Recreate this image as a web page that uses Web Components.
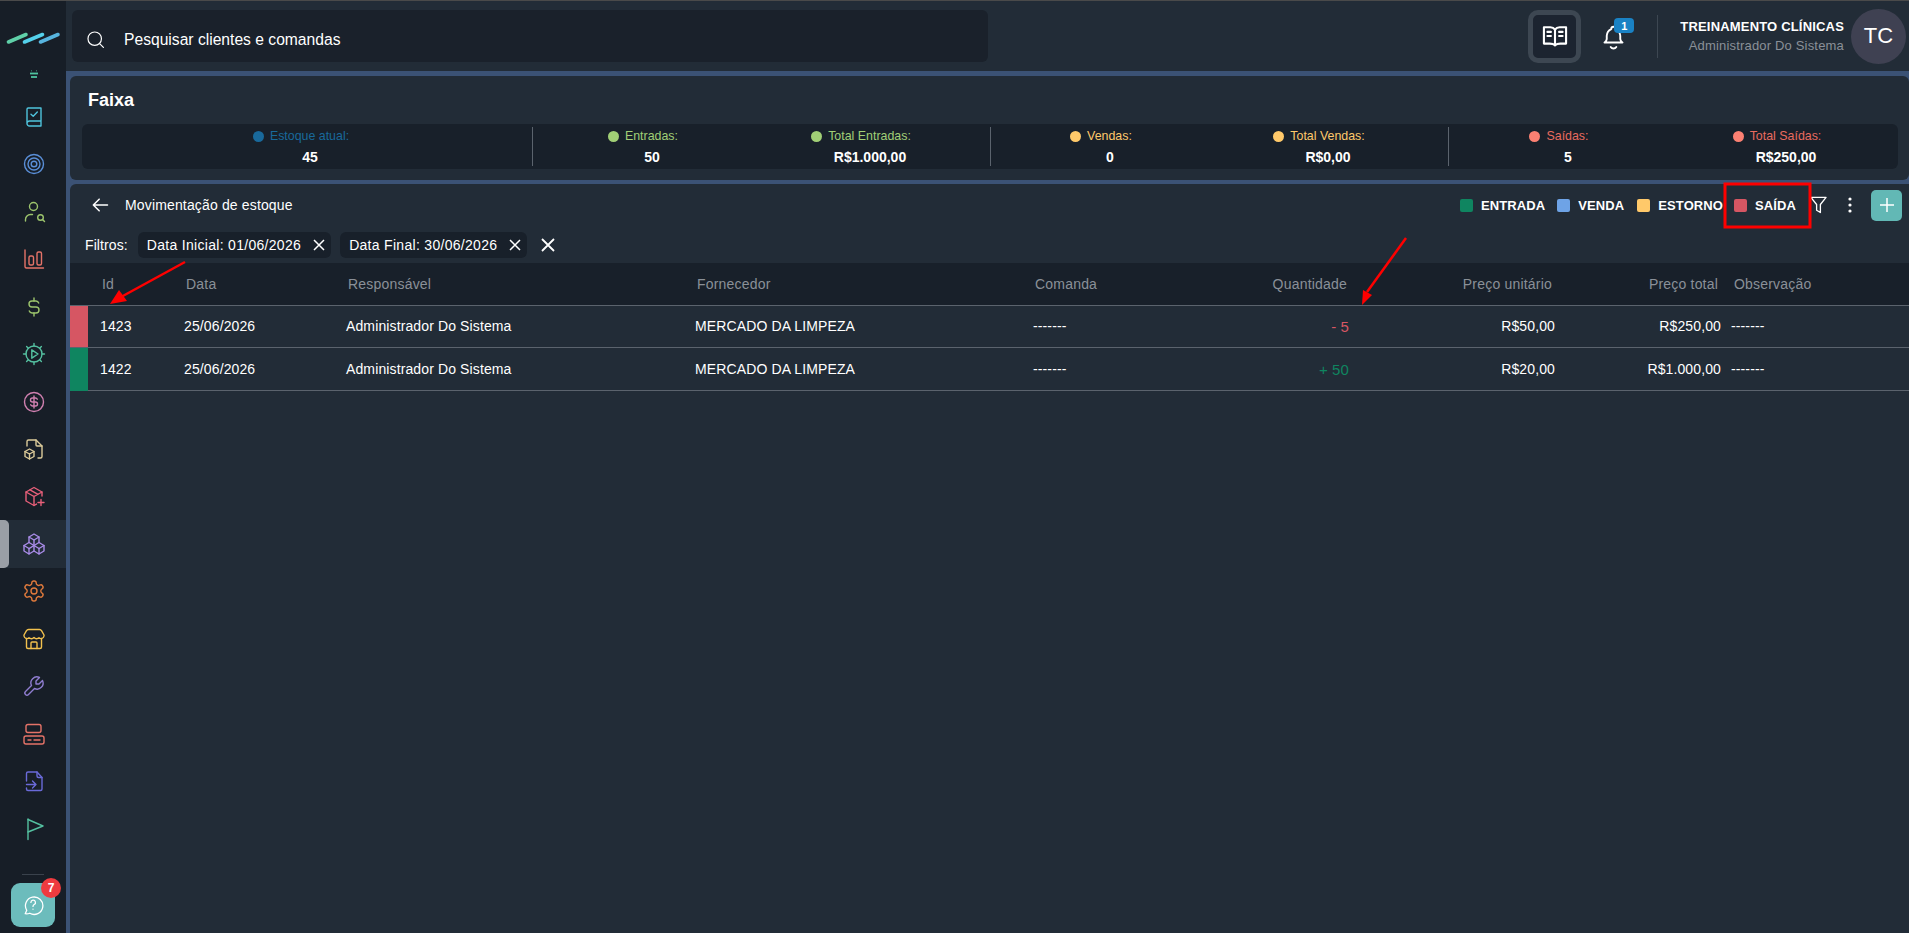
<!DOCTYPE html>
<html lang="pt-BR">
<head>
<meta charset="utf-8">
<title>Movimentação de estoque</title>
<style>
  html, body { margin: 0; height: 100%; background: #3b5275; overflow: hidden; }
  body { font-family: "Liberation Sans", Arial, sans-serif; color: #fff; }
</style>
</head>
<body>
<app-shell>
  <side-nav slot="nav"></side-nav>
  <top-bar slot="top"></top-bar>
  <stat-strip slot="stats"></stat-strip>
  <stock-panel slot="panel"></stock-panel>
</app-shell>
<mark-up></mark-up>

<script>
const ICONS = {
  book: ['#4fc3dc', '<path d="M5 18.500V4.200C5 3.500 5.500 3 6.200 3H19v18H7.500A2.500 2.500 0 0 1 5 18.500A2.500 2.500 0 0 1 7.500 16H19"/><path d="M9 9.200l2.200 2L15.300 7"/>'],
  target: ['#5a8fd8', '<circle cx="12" cy="12" r="9.500"/><circle cx="12" cy="12" r="6"/><circle cx="12" cy="12" r="2.800"/>'],
  user: ['#9cc46c', '<circle cx="11.500" cy="6.500" r="4"/><path d="M3.500 21v-1.500A5 5 0 0 1 8.500 14.500h2"/><circle cx="18.500" cy="17.500" r="2.800"/><path d="M20.500 19.500l2 2"/>'],
  chart: ['#e57368', '<path d="M3 3v16.500A1.500 1.500 0 0 0 4.500 21H21.500"/><rect x="7" y="9" width="4.500" height="9" rx="1.500"/><rect x="15" y="5" width="4.500" height="13" rx="1.500"/>'],
  dollar: ['#9cc46c', '<path d="M16.700 8a3 3 0 0 0-2.700-2h-4a3 3 0 0 0 0 6h4a3 3 0 0 1 0 6h-4a3 3 0 0 1-2.700-2"/><path d="M12 3v3m0 12v3"/>'],
  cogplay: ['#54c0a0', '<circle cx="12" cy="12" r="8"/><path d="M9.800 7.800v8.400l6.200-4.200z"/><path d="M12 1.500v2.500M12 20v2.500M1.500 12H4M20 12h2.500M4.600 4.600l1.700 1.700M17.700 17.700l1.700 1.700M4.600 19.400l1.700-1.700M17.700 6.300l1.700-1.700"/>'],
  coin: ['#d080b0', '<circle cx="12" cy="12" r="9.500"/><path d="M15.300 9.200a2 2 0 0 0-1.800-1.200h-3a2 2 0 1 0 0 4h3a2 2 0 1 1 0 4h-3a2 2 0 0 1-1.800-1.200"/><path d="M12 6v12"/>'],
  filebox: ['#dccb9a', '<path d="M5 9V4.500A1.500 1.500 0 0 1 6.500 3H14l6 6v10.500A1.500 1.500 0 0 1 18.500 21H16"/><path d="M14 3v5a1 1 0 0 0 1 1h5"/><path d="M7.500 12l4.500 2.500v5L7.500 22 3 19.500v-5z"/><path d="M3 14.500l4.500 2.500 4.500-2.500M7.500 17v5"/>'],
  boxplus: ['#e8607a', '<path d="M20 12V8l-8-4.500L4 8v9l8 4.500 2.500-1.400"/><path d="M4 8l8 4.500L20 8M12 12.500v9M8 5.800l8 4.500"/><path d="M16 18.500h6M19 15.500v6"/>'],
  packages: ['#a98ce8', '<path d="M7 16.500l-5-3 5-3 5 3V19l-5 3z"/><path d="M2 13.500V19l5 3"/><path d="M7 16.545l5-3.030"/><path d="M17 16.500l-5-3 5-3 5 3V19l-5 3z"/><path d="M12 19l5 3"/><path d="M17 16.500l5-3"/><path d="M12 13.500V8L7 5l5-3 5 3v5.500"/><path d="M7 5.030v5.455"/><path d="M12 8l5-3"/>'],
  gear: ['#e07a3c', '<path d="M12.220 2h-.44a2 2 0 0 0-2 2v.18a2 2 0 0 1-1 1.730l-.43.25a2 2 0 0 1-2 0l-.15-.08a2 2 0 0 0-2.730.73l-.22.38a2 2 0 0 0 .73 2.730l.15.1a2 2 0 0 1 1 1.720v.51a2 2 0 0 1-1 1.740l-.15.09a2 2 0 0 0-.73 2.730l.22.38a2 2 0 0 0 2.730.73l.15-.08a2 2 0 0 1 2 0l.43.25a2 2 0 0 1 1 1.730V20a2 2 0 0 0 2 2h.44a2 2 0 0 0 2-2v-.18a2 2 0 0 1 1-1.730l.43-.25a2 2 0 0 1 2 0l.15.08a2 2 0 0 0 2.730-.73l.22-.39a2 2 0 0 0-.73-2.730l-.15-.08a2 2 0 0 1-1-1.740v-.5a2 2 0 0 1 1-1.740l.15-.09a2 2 0 0 0 .73-2.730l-.22-.38a2 2 0 0 0-2.730-.73l-.15.08a2 2 0 0 1-2 0l-.43-.25a2 2 0 0 1-1-1.730V4a2 2 0 0 0-2-2z"/><circle cx="12" cy="12" r="3"/>'],
  store: ['#f2c14e', '<path d="M4.500 11.500V20a1.500 1.500 0 0 0 1.500 1.500h12a1.500 1.500 0 0 0 1.500-1.500v-8.500"/><path d="M6.500 2.500h11c1 0 1.600.4 2 1.200L22 8v1a3 3 0 0 1-5 1.800a3.500 3.500 0 0 1-5-.3a3.500 3.500 0 0 1-5 .3A3 3 0 0 1 2 9V8l2.500-4.300c.4-.8 1-1.200 2-1.200z"/><path d="M9 21.500V16a1 1 0 0 1 1-1h4a1 1 0 0 1 1 1v5.500"/>'],
  tool: ['#8f7dd0', '<path transform="translate(24 0) scale(-1 1)" d="M7 10h3V7L6.500 3.500a6 6 0 0 1 8 8l6 6a2 2 0 0 1-3 3l-6-6a6 6 0 0 1-8-8L7 10"/>'],
  server: ['#e57368', '<rect x="4" y="2.500" width="15" height="8" rx="2"/><rect x="2" y="14" width="20" height="8" rx="2"/><path d="M6 18h3M12 18h6"/>'],
  fileimport: ['#6a6ad8', '<path d="M4.500 12V4.500A1.500 1.500 0 0 1 6 3h9l5 5.500V20a1.500 1.500 0 0 1-1.500 1.500H6A1.500 1.500 0 0 1 4.500 20v-1"/><path d="M15 3v4a1.500 1.500 0 0 0 1.500 1.500H20"/><path d="M4.500 15.500H14M10.500 12l3.500 3.500-3.500 3.500"/>'],
  flag: ['#54c0a0', '<path d="M6 2v20.500"/><path d="M6 2.500l15 6.500-15 6"/>']
};

class AppShell extends HTMLElement {
  constructor() {
    super();
    this.attachShadow({mode: 'open'});
    this.shadowRoot.innerHTML = `
      <style>
        :host { display: grid; grid-template-columns: 66px 1fr; height: 933px; width: 1909px; overflow: hidden; }
        .main { display: flex; flex-direction: column; min-width: 0; height: 933px; }
        .content { flex: 1; display: flex; flex-direction: column; gap: 4px; padding: 5px 0 0 4px; min-height: 0; }
      </style>
      <div><slot name="nav"></slot></div>
      <div class="main">
        <slot name="top"></slot>
        <div class="content">
          <slot name="stats"></slot>
          <slot name="panel"></slot>
        </div>
      </div>`;
  }
}
customElements.define('app-shell', AppShell);

class NavIcon extends HTMLElement {
  connectedCallback() {
    const [color, paths] = ICONS[this.getAttribute('name')];
    const active = this.hasAttribute('active');
    this.attachShadow({mode: 'open'}).innerHTML = `
      <style>
        :host { display: flex; align-items: center; justify-content: center; height: 47.47px; width: 66px; position: relative; box-sizing: border-box; padding-left: 2px; }
        :host([active]) { background: #222c37; }
        .bar { position: absolute; left: 0; top: 0; bottom: 0; width: 9px; background: #9a9fa6; border-radius: 0 5px 5px 0; }
        svg { width: 24px; height: 24px; fill: none; stroke: ${color}; stroke-width: 1.400; stroke-linecap: round; stroke-linejoin: round; }
      </style>
      ${active ? '<div class="bar"></div>' : ''}
      <svg viewBox="0 0 24 24">${paths}</svg>`;
  }
}
customElements.define('nav-icon', NavIcon);

class SideNav extends HTMLElement {
  connectedCallback() {
    const names = ['book','target','user','chart','dollar','cogplay','coin','filebox','boxplus','packages','gear','store','tool','server','fileimport','flag'];
    this.attachShadow({mode: 'open'}).innerHTML = `
      <style>
        :host { display: flex; flex-direction: column; height: 933px; background: #171e27; box-sizing: border-box; border-top: 1px solid #4a4a4a; }
        .logo { height: 62px; display: flex; align-items: flex-end; padding-bottom: 14px; box-sizing: border-box; flex: none; }
        .logo svg { width: 66px; height: 20px; }
        .mini { height: 30px; display: flex; justify-content: center; flex: none; align-items: flex-start; padding: 7px 0 0 2px; box-sizing: border-box; }
        .mini svg { width: 10px; height: 10px; fill: none; stroke: #4fc5a0; }
        .items { flex: none; }
        .rule { width: 22px; height: 1px; background: #3a424c; margin: auto auto 8px 22px; }
        .help { position: relative; flex: none; width: 44px; height: 44px; border-radius: 9px; background: #6cbcbc; margin: 0 0 6px 11px; display: flex; align-items: center; justify-content: center; }
        .help svg { width: 22px; height: 22px; fill: none; stroke: #fff; stroke-width: 1.400; stroke-linecap: round; stroke-linejoin: round; }
        .badge { position: absolute; top: -5px; right: -6px; width: 20px; height: 20px; border-radius: 50%; background: #ee3b3f; color: #fff; font-size: 12px; font-weight: 700; display: flex; align-items: center; justify-content: center; }
      </style>
      <div class="logo">
        <svg viewBox="0 0 66 20" stroke-width="3.600" stroke-linecap="round">
          <path d="M8.500 13L26 5.500" stroke="#5fd0a8"/>
          <path d="M24.500 13L42.500 5.500" stroke="#54d0ea"/>
          <path d="M40.500 13L58 5.500" stroke="#57b4de"/>
        </svg>
      </div>
      <div class="mini"><svg viewBox="0 0 10 10"><path d="M2.500 0v1.500M7.500 0v1.500" stroke-width="1" opacity=".5"/><path d="M1 3.500h8" stroke-width="1.800"/><path d="M2 7h6" stroke-width="1.800"/></svg></div>
      <div class="items">${names.map(n => `<nav-icon name="${n}"${n === 'packages' ? ' active' : ''}></nav-icon>`).join('')}</div>
      <div class="rule"></div>
      <div class="help">
        <svg viewBox="0 0 24 24"><path d="M3.500 21.500l1.700-3.700A9.500 9.500 0 1 1 8.500 21a11 11 0 0 1-5 .5z"/><path d="M9.700 9.200a2.500 2.500 0 1 1 3.600 2.300c-.9.500-1.300 1-1.300 2"/><path d="M12 16.500v.1"/></svg>
        <span class="badge">7</span>
      </div>`;
  }
}
customElements.define('side-nav', SideNav);

class TopBar extends HTMLElement {
  connectedCallback() {
    this.attachShadow({mode: 'open'}).innerHTML = `
      <style>
        :host { display: flex; align-items: center; height: 71px; flex: none; background: #222c37; box-sizing: border-box; border-top: 1px solid #4a4a4a; padding: 0 3px 0 6px; }
        .search { width: 916px; height: 52px; background: #1a212b; border-radius: 6px; display: flex; align-items: center; gap: 19px; padding: 7px 0 0 14px; box-sizing: border-box; font-size: 15.650px; }
        .search svg { width: 19px; height: 19px; fill: none; stroke: #fff; stroke-width: 1.500; stroke-linecap: round; }
        .right { margin-left: auto; display: flex; align-items: center; }
        .bookbtn { width: 53px; height: 53px; box-sizing: border-box; border: 5px solid #3d4752; border-radius: 10px; background: #1c2430; display: flex; align-items: center; justify-content: center; }
        .bookbtn svg { width: 28px; height: 28px; fill: none; stroke: #fff; stroke-width: 1.800; stroke-linecap: round; stroke-linejoin: round; }
        .bell { position: relative; width: 30px; height: 30px; margin-left: 19px; }
        .bell svg { width: 27px; height: 27px; fill: none; stroke: #fff; stroke-width: 1.700; stroke-linecap: round; stroke-linejoin: round; margin-top: 3px; }
        .bell b { position: absolute; left: 14px; top: -3px; width: 20px; height: 15px; background: #1a82c4; border-radius: 4px; font-size: 11px; display: flex; align-items: center; justify-content: center; }
        .sep { width: 1px; height: 43px; background: #3d4752; margin: 0 22px 0 27px; }
        .who { text-align: right; line-height: 19px; margin-right: 7px; letter-spacing: .18px; }
        .who .n { font-size: 13px; font-weight: 700; }
        .who .r { font-size: 13px; color: #8a9098; }
        .avatar { width: 55px; height: 55px; border-radius: 50%; background: #3f4152; font-size: 22px; display: flex; align-items: center; justify-content: center; }
      </style>
      <div class="search">
        <svg viewBox="0 0 24 24"><circle cx="11" cy="11" r="8.500"/><path d="M17.500 17.500L22 22"/></svg>
        <span>Pesquisar clientes e comandas</span>
      </div>
      <div class="right">
        <div class="bookbtn"><svg viewBox="0 0 24 24"><path d="M12 20c-1.300-1.200-2.800-1.500-4.500-1.500H2.500V4.500H8c2 0 3.200.8 4 2 .8-1.200 2-2 4-2h5.500v14h-5c-1.700 0-3.200.3-4.500 1.500z"/><path d="M12 6.500V20M5.500 8.500h3M5.500 12h3M15.500 8.500h3M15.500 12h3"/></svg></div>
        <div class="bell"><svg viewBox="0 0 24 24"><path d="M10 4.500a2 2 0 1 1 4 0a7 7 0 0 1 4 6v3a4 4 0 0 0 2 3H4a4 4 0 0 0 2-3v-3a7 7 0 0 1 4-6"/><path d="M9.500 20.500a3 3 0 0 0 5 0"/></svg><b>1</b></div>
        <div class="sep"></div>
        <div class="who"><div class="n">TREINAMENTO CLÍNICAS</div><div class="r">Administrador Do Sistema</div></div>
        <div class="avatar">TC</div>
      </div>`;
  }
}
customElements.define('top-bar', TopBar);

class StatItem extends HTMLElement {
  connectedCallback() {
    const color = this.getAttribute('color');
    const text = this.getAttribute('text') || color;
    this.attachShadow({mode: 'open'}).innerHTML = `
      <style>
        :host { display: flex; flex-direction: column; align-items: center; gap: 5px; font-size: 12.400px; }
        .l { display: flex; align-items: center; gap: 6px; color: ${text}; line-height: 15px; margin-right: 18px; padding-top: 1px; }
        .l i { width: 11px; height: 11px; border-radius: 50%; background: ${color}; }
        .v { font-size: 14px; font-weight: 700; line-height: 16px; color: #fff; }
      </style>
      <div class="l"><i></i><span>${this.getAttribute('label')}</span></div>
      <div class="v">${this.getAttribute('value')}</div>`;
  }
}
customElements.define('stat-item', StatItem);

class StatStrip extends HTMLElement {
  connectedCallback() {
    this.attachShadow({mode: 'open'}).innerHTML = `
      <style>
        :host { display: block; flex: none; height: 104px; box-sizing: border-box; background: #222c37; border-radius: 6px; padding: 13px 11px 0 12px; }
        h2 { margin: 0 0 12px 6px; font-size: 18px; font-weight: 700; line-height: 23px; }
        .bar { display: grid; grid-template-columns: 450px 458px 458px 450px; height: 45px; background: #18202a; border-radius: 6px; align-items: stretch; }
        .sec { display: grid; align-items: center; margin: 3px 0; border-left: 1px solid #5b636d; }
        .sec:first-child { border-left: 0; grid-template-columns: 1fr; padding-left: 6px; }
        .two { grid-template-columns: 218px 218px; padding-left: 10px; }
      </style>
      <h2>Faixa</h2>
      <div class="bar">
        <div class="sec"><stat-item color="#19699b" label="Estoque atual:" value="45"></stat-item></div>
        <div class="sec two">
          <stat-item color="#a1cf76" label="Entradas:" value="50"></stat-item>
          <stat-item color="#a1cf76" label="Total Entradas:" value="R$1.000,00"></stat-item>
        </div>
        <div class="sec two">
          <stat-item color="#ffc96a" label="Vendas:" value="0"></stat-item>
          <stat-item color="#ffc96a" label="Total Vendas:" value="R$0,00"></stat-item>
        </div>
        <div class="sec two">
          <stat-item color="#fb8072" text="#e96b5f" label="Saídas:" value="5"></stat-item>
          <stat-item color="#fb8072" text="#e96b5f" label="Total Saídas:" value="R$250,00"></stat-item>
        </div>
      </div>`;
  }
}
customElements.define('stat-strip', StatStrip);

class FilterChip extends HTMLElement {
  constructor() {
    super();
    this.attachShadow({mode: 'open'}).innerHTML = `
      <style>
        :host { display: inline-flex; align-items: center; height: 26px; box-sizing: border-box; padding: 0 6px 0 9px; gap: 12px; background: #18202a; border-radius: 6px; font-size: 14px; letter-spacing: .3px; }
        svg { width: 12px; height: 12px; stroke: #fff; stroke-width: 1.500; fill: none; }
      </style>
      <slot></slot>
      <svg viewBox="0 0 12 12"><path d="M1 1l10 10M11 1L1 11"/></svg>`;
  }
}
customElements.define('filter-chip', FilterChip);

class LegendItem extends HTMLElement {
  connectedCallback() {
    this.attachShadow({mode: 'open'}).innerHTML = `
      <style>
        :host { display: inline-flex; align-items: center; gap: 8px; font-size: 13px; font-weight: 700; letter-spacing: .1px; }
        i { width: 13px; height: 13px; border-radius: 2px; background: ${this.getAttribute('color')}; }
      </style>
      <i></i><slot></slot>`;
  }
}
customElements.define('legend-item', LegendItem);

class StockRow extends HTMLElement {
  connectedCallback() {
    const color = this.getAttribute('color');
    const cells = JSON.parse(this.getAttribute('cells'));
    this.attachShadow({mode: 'open'}).innerHTML = `
      <style>
        :host { display: grid; grid-template-columns: var(--cols); height: 42px; box-sizing: border-box; border-bottom: 1px solid #5b636d; font-size: 14px; letter-spacing: .12px; align-items: center; padding-bottom: 1px; }
        :host(:last-child) { height: 43px; padding-bottom: 0; }
        .b { align-self: stretch; background: ${color}; margin-bottom: -1px; }
        .id { padding-left: 12px; }
        .r { text-align: right; }
        .q { color: ${color}; font-size: 15px; padding-right: 1px; }
        .o { padding-left: 10px; }
      </style>
      <div class="b"></div>
      <div class="id">${cells[0]}</div><div>${cells[1]}</div><div>${cells[2]}</div><div>${cells[3]}</div><div>${cells[4]}</div>
      <div class="r q">${cells[5]}</div><div class="r">${cells[6]}</div><div class="r">${cells[7]}</div><div class="o">${cells[8]}</div>`;
  }
}
customElements.define('stock-row', StockRow);

class StockPanel extends HTMLElement {
  connectedCallback() {
    this.attachShadow({mode: 'open'}).innerHTML = `
      <style>
        :host { display: flex; flex-direction: column; flex: 1; min-height: 0; background: #222c37; border-radius: 6px 0 0 0; --cols: 18px 96px 162px 349px 338px 198px 119px 205px 166px 1fr; }
        .head { display: flex; align-items: center; height: 42px; flex: none; padding: 0 7px 0 20px; }
        .head svg.back { width: 20px; height: 20px; fill: none; stroke: #fff; stroke-width: 1.800; stroke-linecap: round; stroke-linejoin: round; }
        .title { font-size: 14px; margin-left: 15px; letter-spacing: .15px; }
        .tools { margin-left: auto; display: flex; align-items: center; }
        .tools legend-item { margin-right: 13px; }
        .tools legend-item:nth-of-type(1) { margin-right: 12px; }
        .tools legend-item:nth-of-type(3) { margin-right: 11px; }
        .tools legend-item:nth-of-type(4) { margin-right: 0; }
        .funnel { width: 17px; height: 18px; fill: none; stroke: #fff; stroke-width: 1.400; stroke-linejoin: round; margin-left: 14px; }
        .dots { width: 4px; height: 16px; margin: 0 19px 0 21px; }
        .plus { width: 31px; height: 31px; background: #62b8b5; border-radius: 5px; display: flex; align-items: center; justify-content: center; }
        .plus svg { width: 14px; height: 14px; stroke: #fff; stroke-width: 1.500; }
        .filters { display: flex; align-items: center; height: 37px; flex: none; padding-left: 15px; gap: 9px; font-size: 14px; box-sizing: border-box; }
        .filters > span { margin-right: 1px; letter-spacing: .1px; }
        .clear { width: 14px; height: 14px; stroke: #fff; stroke-width: 1.800; fill: none; margin-left: 5px; }
        .thead { display: grid; grid-template-columns: var(--cols); height: 42px; flex: none; background: #18202a; border-bottom: 1px solid #5b636d; font-size: 14px; letter-spacing: .2px; color: #8a9098; align-items: center; box-sizing: content-box; }
        .thead div { padding-left: 2px; }
        .thead .id { padding-left: 14px; }
        .thead .r { text-align: right; padding: 0 3px 0 0; }
        .thead .obs { padding-left: 13px; }
      </style>
      <div class="head">
        <svg class="back" viewBox="0 0 24 24"><path d="M21 12H4M11 5l-7 7 7 7"/></svg>
        <span class="title">Movimentação de estoque</span>
        <div class="tools">
          <legend-item color="#0f8560">ENTRADA</legend-item>
          <legend-item color="#6ea3e6">VENDA</legend-item>
          <legend-item color="#ffc96a">ESTORNO</legend-item>
          <legend-item color="#d65663">SAÍDA</legend-item>
          <svg class="funnel" viewBox="0 0 18 18"><path d="M1 1h16l-6 7.500V17l-4-2.500v-6z"/></svg>
          <svg class="dots" viewBox="0 0 4 16" fill="#fff"><circle cx="2" cy="2" r="1.600"/><circle cx="2" cy="8" r="1.600"/><circle cx="2" cy="14" r="1.600"/></svg>
          <div class="plus"><svg viewBox="0 0 14 14"><path d="M7 0v14M0 7h14"/></svg></div>
        </div>
      </div>
      <div class="filters">
        <span>Filtros:</span>
        <filter-chip>Data Inicial: 01/06/2026</filter-chip>
        <filter-chip>Data Final: 30/06/2026</filter-chip>
        <svg class="clear" viewBox="0 0 14 14"><path d="M1 1l12 12M13 1L1 13"/></svg>
      </div>
      <div class="thead">
        <span></span>
        <div class="id">Id</div><div>Data</div><div>Responsável</div><div>Fornecedor</div><div>Comanda</div>
        <div class="r">Quantidade</div><div class="r">Preço unitário</div><div class="r">Preço total</div><div class="obs">Observação</div>
      </div>
      <stock-row color="#d65663" cells='["1423","25/06/2026","Administrador Do Sistema","MERCADO DA LIMPEZA","-------","- 5","R$50,00","R$250,00","-------"]'></stock-row>
      <stock-row color="#0f8560" cells='["1422","25/06/2026","Administrador Do Sistema","MERCADO DA LIMPEZA","-------","+ 50","R$20,00","R$1.000,00","-------"]'></stock-row>`;
  }
}
customElements.define('stock-panel', StockPanel);

// the red marks drawn on the screenshot
class MarkUp extends HTMLElement {
  connectedCallback() {
    this.attachShadow({mode: 'open'}).innerHTML = `
      <style>
        :host { display: block; position: absolute; left: 0; top: 0; width: 1909px; height: 933px; pointer-events: none; }
        svg { width: 100%; height: 100%; }
      </style>
      <svg viewBox="0 0 1909 933">
        <rect x="1725" y="184" width="85" height="43" fill="none" stroke="#f00" stroke-width="3"/>
        <path d="M185 262L121 297" stroke="#f00" stroke-width="2.500"/>
        <path d="M110 304L119 290L127 301z" fill="#f00"/>
        <path d="M1406 238L1367 292" stroke="#f00" stroke-width="2.500"/>
        <path d="M1362 305L1363 290L1372 295z" fill="#f00"/>
      </svg>`;
  }
}
customElements.define('mark-up', MarkUp);
</script>
</body>
</html>
